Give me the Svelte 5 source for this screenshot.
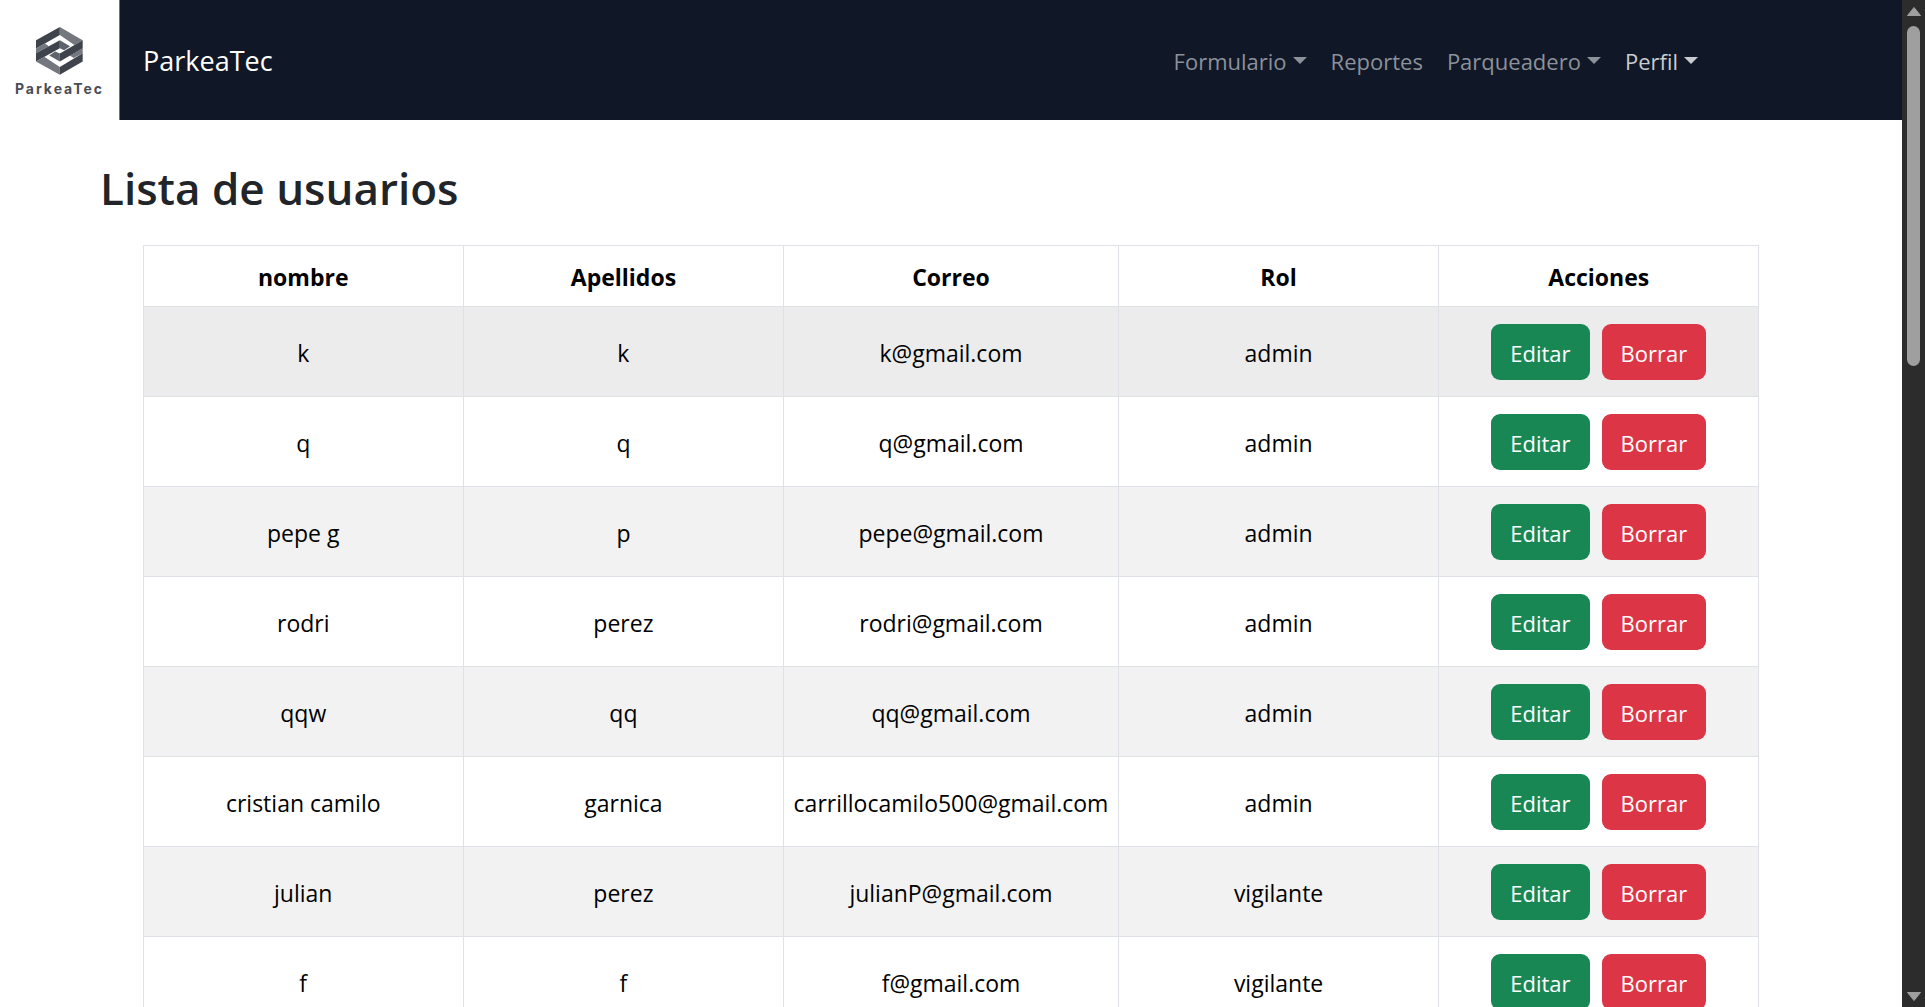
<script>
  const menu = [
    { label: 'Formulario', dropdown: true },
    { label: 'Reportes', dropdown: false },
    { label: 'Parqueadero', dropdown: true },
    { label: 'Perfil', dropdown: true, active: true },
  ];

  const users = [
    { nombre: 'k', apellidos: 'k', correo: 'k@gmail.com', rol: 'admin', hovered: true },
    { nombre: 'q', apellidos: 'q', correo: 'q@gmail.com', rol: 'admin' },
    { nombre: 'pepe g', apellidos: 'p', correo: 'pepe@gmail.com', rol: 'admin' },
    { nombre: 'rodri', apellidos: 'perez', correo: 'rodri@gmail.com', rol: 'admin' },
    { nombre: 'qqw', apellidos: 'qq', correo: 'qq@gmail.com', rol: 'admin' },
    { nombre: 'cristian camilo', apellidos: 'garnica', correo: 'carrillocamilo500@gmail.com', rol: 'admin' },
    { nombre: 'julian', apellidos: 'perez', correo: 'julianP@gmail.com', rol: 'vigilante' },
    { nombre: 'f', apellidos: 'f', correo: 'f@gmail.com', rol: 'vigilante' },
  ];
</script>

<div class="window">
  <div class="page">
    <header class="navbar">
      <a class="logo" href="#inicio" aria-label="Inicio">
        <svg class="mark" viewBox="108 81 142 145" aria-hidden="true">
          <path fill="#3f434c" d="M108 121 180 81v24l-45 26-27 15z" />
          <path fill="#74777e" d="M180 81l69 40-25 14-44-30z" />
          <path fill="#74777e" d="M108 146l27-15 12 8-39 21z" />
          <path fill="#5f636b" d="M180 121l31 18-18 12-13-6z" />
          <path fill="#5f636b" d="M180 185l-32-18 18-12 14 6z" />
          <path fill="#74777e" d="M249 160l-27 15-12-8 39-22z" />
          <path fill="#3f434c" d="M108 160l72-39v24l-72 40z" />
          <path fill="#3f434c" d="M249 121v24l-69 40v-24z" />
          <path fill="#74777e" d="M108 185l25-14 47 31v23z" />
          <path fill="#3f434c" d="M180 225l69-40v-25l-69 42z" />
        </svg>
        <span class="wordmark">ParkeaTec</span>
      </a>
      <a class="brand" href="#inicio">ParkeaTec</a>
      <nav class="menu">
        {#each menu as item}
          <a href="#{item.label.toLowerCase()}" class="link" class:active={item.active}>
            {item.label}{#if item.dropdown}<span class="caret"></span>{/if}
          </a>
        {/each}
      </nav>
    </header>

    <main>
      <h1>Lista de usuarios</h1>
      <table>
        <colgroup>
          <col /><col /><col class="mail" /><col /><col />
        </colgroup>
        <thead>
          <tr>
            <th scope="col">nombre</th>
            <th scope="col">Apellidos</th>
            <th scope="col">Correo</th>
            <th scope="col">Rol</th>
            <th scope="col">Acciones</th>
          </tr>
        </thead>
        <tbody>
          {#each users as user}
            <tr class:hovered={user.hovered}>
              <td>{user.nombre}</td>
              <td>{user.apellidos}</td>
              <td>{user.correo}</td>
              <td>{user.rol}</td>
              <td class="tools">
                <div class="actions">
                  <button type="button" class="edit">Editar</button>
                  <button type="button" class="remove">Borrar</button>
                </div>
              </td>
            </tr>
          {/each}
        </tbody>
      </table>
    </main>
  </div>

  <div class="scrollbar" aria-hidden="true">
    <svg viewBox="0 0 16 11"><path d="M8 1.5 14.5 9.5h-13z" /></svg>
    <div class="track"><div class="thumb"></div></div>
    <svg viewBox="0 0 16 11"><path d="M8 9.5 14.5 1.5h-13z" /></svg>
  </div>
</div>

<style>
  :global(body) {
    margin: 0;
    background: #fff;
  }

  .window {
    display: flex;
    height: 100vh;
    overflow: hidden;
    font-family: 'Segoe UI', 'Open Sans', 'Noto Sans', sans-serif;
    font-size: 23px;
    line-height: 36px;
    color: #212529;
  }

  .page {
    flex: 1;
    min-width: 0;
    overflow-y: auto;
    scrollbar-width: none;
  }

  .navbar {
    display: flex;
    align-items: center;
    height: 120px;
    padding-right: 192px;
    background: #101726;
  }

  .logo {
    display: flex;
    flex-direction: column;
    align-items: center;
    gap: 4px;
    box-sizing: border-box;
    width: 120px;
    height: 120px;
    padding-top: 27px;
    border-right: 1px solid #6d727c;
    background: #fff;
    color: #4a4d55;
    text-decoration: none;
  }

  .mark {
    width: 47px;
    height: 48px;
  }

  .wordmark {
    font-family: Inter, sans-serif;
    font-size: 14px;
    font-weight: 700;
    line-height: 20px;
    letter-spacing: 2px;
  }

  .brand {
    margin-left: 23px;
    padding-top: 2px;
    font-size: 27px;
    color: #fff;
    text-decoration: none;
  }

  .menu {
    display: flex;
    margin-left: auto;
    padding-top: 2px;
    font-size: 22px;
  }

  .link {
    padding: 12px;
    color: #8c919a;
    text-decoration: none;
    white-space: nowrap;
  }

  .link.active {
    color: #c9cbcf;
  }

  .caret {
    display: inline-block;
    margin-left: 6px;
    vertical-align: 6px;
    border: 7px solid transparent;
    border-top-color: currentColor;
    border-bottom: 0;
  }

  h1 {
    margin: 40px 100px 28px;
    font-size: 44px;
    font-weight: 600;
    line-height: 57px;
  }

  table {
    width: 85%;
    margin: 0 auto;
    table-layout: fixed;
    border-collapse: collapse;
    color: #000;
    text-align: center;
  }

  .mail {
    width: 335px;
  }

  th,
  td {
    padding: 13px 0 11px;
    border: 1px solid #dee2e6;
  }

  th {
    font-weight: 700;
  }

  .tools {
    padding: 17px 0 16px;
  }

  tbody tr:nth-child(odd) {
    background: #f2f2f2;
  }

  tbody tr.hovered {
    background: #ececec;
  }

  .actions {
    display: flex;
    justify-content: center;
    gap: 12px;
  }

  button {
    padding: 11px 19px 9px;
    border: 0;
    border-radius: 9px;
    font: inherit;
    font-size: 22px;
    color: #fff;
    cursor: pointer;
  }

  .edit {
    background: #198754;
  }

  .remove {
    background: #dc3545;
  }

  .scrollbar {
    display: flex;
    flex-direction: column;
    align-items: center;
    gap: 9px;
    box-sizing: border-box;
    width: 23px;
    padding: 6px 0 5px;
    background: #2c2c2c;
  }

  .scrollbar svg {
    width: 16px;
    height: 11px;
    fill: #9f9f9f;
    stroke: #9f9f9f;
    stroke-linejoin: round;
  }

  .track {
    flex: 1;
    width: 13px;
  }

  .thumb {
    height: 35.6%;
    border-radius: 7px;
    background: #9f9f9f;
  }
</style>
